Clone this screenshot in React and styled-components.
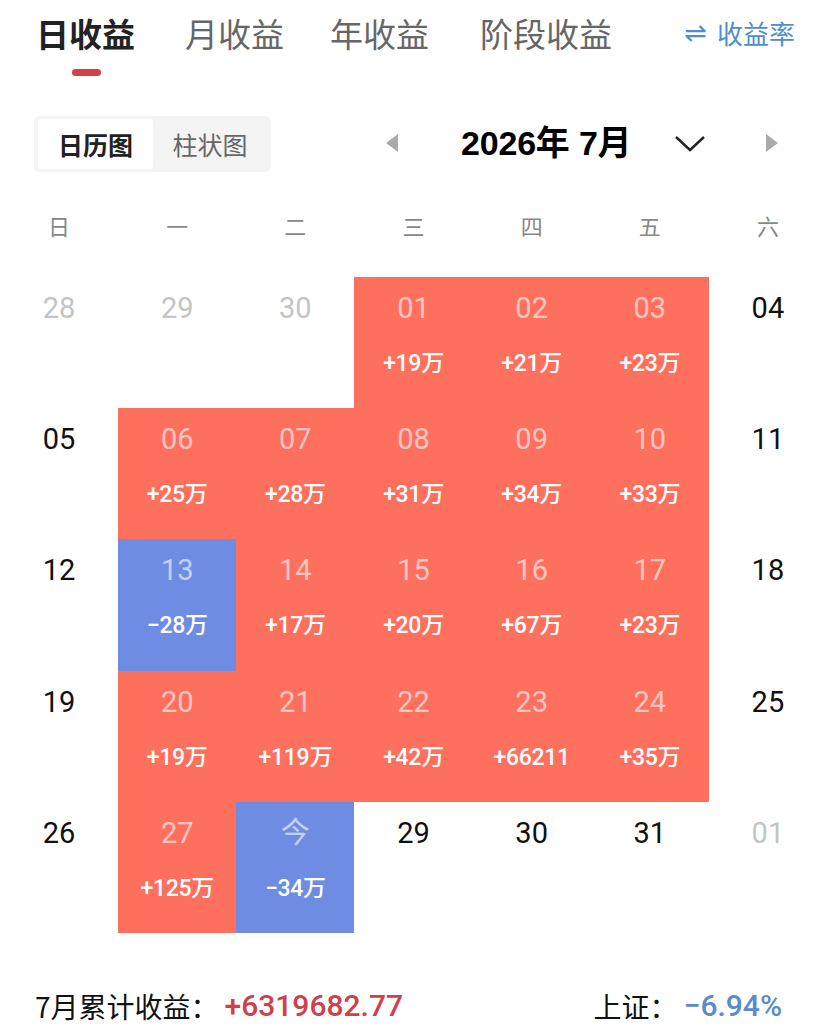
import styled, { createGlobalStyle } from 'styled-components';

const GlobalStyle = createGlobalStyle`
  html, body {
    margin: 0;
    padding: 0;
    background: #fff;
  }
  body {
    font-family: Roboto, "Noto Sans CJK SC", sans-serif;
  }
`;

const RED = '#fe705e';
const BLUE = '#6e8de2';

const Page = styled.div`
  width: 827px;
  height: 1031px;
  overflow: hidden;
  background: #fff;
`;

const TabBar = styled.div`
  display: flex;
  align-items: flex-start;
  padding: 13px 32px 0 36px;
  height: 80px;
  box-sizing: border-box;
`;

const Tab = styled.div`
  position: relative;
  font-family: "Noto Sans CJK SC", sans-serif;
  font-size: 33px;
  line-height: 40px;
  margin-right: ${({ $gap }) => $gap}px;
  color: ${({ $active }) => ($active ? '#222' : '#666')};
  font-weight: ${({ $active }) => ($active ? 700 : 400)};

  &::after {
    content: '';
    display: ${({ $active }) => ($active ? 'block' : 'none')};
    position: absolute;
    left: 50%;
    margin-left: -14px;
    top: 56px;
    width: 29px;
    height: 7px;
    border-radius: 4px;
    background: #d2404a;
  }
`;

const RateLink = styled.div`
  margin-left: auto;
  display: flex;
  align-items: center;
  gap: 10px;
  color: #4f8dcb;
  font-family: "Noto Sans CJK SC", sans-serif;
  font-size: 26px;
  line-height: 40px;
`;

const SwapGlyph = styled.span`
  font-family: "DejaVu Sans", sans-serif;
  font-size: 27px;
`;

const Toolbar = styled.div`
  display: flex;
  align-items: center;
  padding: 36px 0 0 34px;
  height: 56px;
`;

const Segment = styled.div`
  display: flex;
  background: #f4f4f4;
  border-radius: 6px;
  padding: 3px 4px;
  height: 56px;
  box-sizing: border-box;
`;

const SegButton = styled.div`
  width: ${({ $w }) => $w}px;
  display: flex;
  align-items: center;
  justify-content: center;
  font-family: "Noto Sans CJK SC", sans-serif;
  font-size: 25px;
  border-radius: 4px;
  background: ${({ $active }) => ($active ? '#fff' : 'transparent')};
  color: ${({ $active }) => ($active ? '#222' : '#666')};
  font-weight: ${({ $active }) => ($active ? 700 : 400)};
`;

const MonthNav = styled.div`
  flex: 1;
  display: flex;
  align-items: center;
  padding-left: 114px;
  margin-top: -2px;
`;

const Arrow = styled.svg`
  width: 14px;
  height: 20px;
  display: block;
`;

const MonthTitle = styled.div`
  font-family: "Liberation Sans", "Noto Sans CJK SC", sans-serif;
  font-weight: 700;
  font-size: 34px;
  line-height: 40px;
  color: #000;
  margin-left: 62px;
  letter-spacing: -0.2px;
`;

const Chevron = styled.svg`
  width: 32px;
  height: 20px;
  margin-left: 43px;
  margin-right: 59px;
  display: block;
`;

const WeekRow = styled.div`
  display: grid;
  grid-template-columns: repeat(7, 1fr);
  margin-top: 36px;
  height: 34px;
  align-items: center;
`;

const WeekLabel = styled.div`
  text-align: center;
  font-family: "Noto Sans CJK SC", sans-serif;
  font-size: 22px;
  color: #888;
`;

const Grid = styled.div`
  display: grid;
  grid-template-columns: repeat(7, 1fr);
  grid-auto-rows: 131.2px;
  margin-top: 35px;
`;

const Cell = styled.div`
  background: ${({ $kind }) => ($kind === 'up' ? RED : $kind === 'down' ? BLUE : 'transparent')};
  display: flex;
  flex-direction: column;
  align-items: center;
  padding-top: 13px;
  box-sizing: border-box;
`;

const DayNum = styled.div`
  font-family: Roboto, "Noto Sans CJK SC", sans-serif;
  font-size: 29px;
  line-height: 36px;
  color: ${({ $tone }) =>
    $tone === 'muted' ? '#c4c4c4' : $tone === 'onColor' ? 'rgba(255,255,255,0.62)' : '#111'};
`;

const Amount = styled.div`
  margin-top: 23px;
  font-family: Roboto, "Noto Sans CJK SC", sans-serif;
  font-size: 23px;
  line-height: 30px;
  font-weight: 500;
  color: #fff;
  letter-spacing: -0.3px;
`;

const Footer = styled.div`
  display: flex;
  justify-content: space-between;
  align-items: center;
  padding: 0 45px 0 35px;
  margin-top: 53px;
  font-family: "Noto Sans CJK SC", sans-serif;
  font-size: 28px;
  color: #111;
`;

const FooterItem = styled.div`
  display: flex;
  align-items: center;
`;

const Figure = styled.span`
  font-family: Roboto, "Noto Sans CJK SC", sans-serif;
  font-weight: 500;
  font-size: 30px;
  margin-left: 6px;
  color: ${({ $up }) => ($up ? '#d0404a' : '#5a8bcb')};
`;

const tabs = [
  { label: '日收益', gap: 50, active: true },
  { label: '月收益', gap: 46 },
  { label: '年收益', gap: 51 },
  { label: '阶段收益', gap: 0 },
];

const week = ['日', '一', '二', '三', '四', '五', '六'];

const cells = [
  { d: '28', tone: 'muted' },
  { d: '29', tone: 'muted' },
  { d: '30', tone: 'muted' },
  { d: '01', kind: 'up', v: '+19万' },
  { d: '02', kind: 'up', v: '+21万' },
  { d: '03', kind: 'up', v: '+23万' },
  { d: '04' },
  { d: '05' },
  { d: '06', kind: 'up', v: '+25万' },
  { d: '07', kind: 'up', v: '+28万' },
  { d: '08', kind: 'up', v: '+31万' },
  { d: '09', kind: 'up', v: '+34万' },
  { d: '10', kind: 'up', v: '+33万' },
  { d: '11' },
  { d: '12' },
  { d: '13', kind: 'down', v: '−28万' },
  { d: '14', kind: 'up', v: '+17万' },
  { d: '15', kind: 'up', v: '+20万' },
  { d: '16', kind: 'up', v: '+67万' },
  { d: '17', kind: 'up', v: '+23万' },
  { d: '18' },
  { d: '19' },
  { d: '20', kind: 'up', v: '+19万' },
  { d: '21', kind: 'up', v: '+119万' },
  { d: '22', kind: 'up', v: '+42万' },
  { d: '23', kind: 'up', v: '+66211' },
  { d: '24', kind: 'up', v: '+35万' },
  { d: '25' },
  { d: '26' },
  { d: '27', kind: 'up', v: '+125万' },
  { d: '今', kind: 'down', v: '−34万' },
  { d: '29' },
  { d: '30' },
  { d: '31' },
  { d: '01', tone: 'muted' },
];

export default function App() {
  return (
    <Page>
      <GlobalStyle />
      <TabBar>
        {tabs.map((t) => (
          <Tab key={t.label} $active={t.active} $gap={t.gap}>
            {t.label}
          </Tab>
        ))}
        <RateLink>
          <SwapGlyph>⇌</SwapGlyph>
          收益率
        </RateLink>
      </TabBar>

      <Toolbar>
        <Segment>
          <SegButton $active $w={115}>日历图</SegButton>
          <SegButton $w={114}>柱状图</SegButton>
        </Segment>
        <MonthNav>
          <Arrow viewBox="0 0 14 20">
            <path d="M13 1 L1 10 L13 19 Z" fill="#aaa" />
          </Arrow>
          <MonthTitle>2026年 7月</MonthTitle>
          <Chevron viewBox="0 0 32 20">
            <path d="M2 4 L16 17 L30 4" fill="none" stroke="#222" strokeWidth="2.4" />
          </Chevron>
          <Arrow viewBox="0 0 14 20">
            <path d="M1 1 L13 10 L1 19 Z" fill="#aaa" />
          </Arrow>
        </MonthNav>
      </Toolbar>

      <WeekRow>
        {week.map((w) => (
          <WeekLabel key={w}>{w}</WeekLabel>
        ))}
      </WeekRow>

      <Grid>
        {cells.map((c, i) => (
          <Cell key={i} $kind={c.kind}>
            <DayNum $tone={c.kind ? 'onColor' : c.tone}>{c.d}</DayNum>
            {c.v && <Amount>{c.v}</Amount>}
          </Cell>
        ))}
      </Grid>

      <Footer>
        <FooterItem>
          7月累计收益：<Figure $up>+6319682.77</Figure>
        </FooterItem>
        <FooterItem>
          上证：<Figure>−6.94%</Figure>
        </FooterItem>
      </Footer>
    </Page>
  );
}
